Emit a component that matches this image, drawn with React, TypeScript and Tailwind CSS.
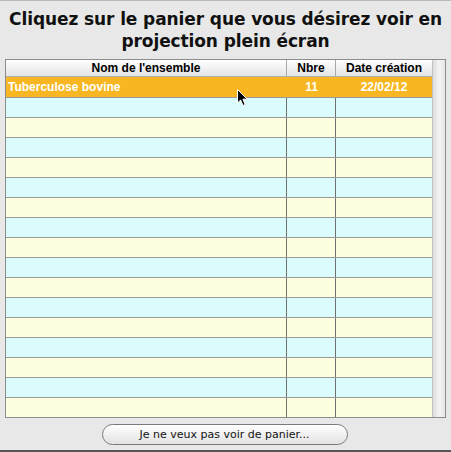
import React from "react";

const rows = Array.from({ length: 16 }, (_, i) => i);

function Cursor() {
  return (
    <svg
      className="absolute left-[236px] top-[87px]"
      width={13}
      height={19}
      viewBox="0 0 13 19"
    >
      <path
        d="M1.5 1.5 L1.5 15 L4.6 12 L7 17.5 L9.2 16.5 L6.9 11.2 L11.2 11.2 Z"
        fill="#000"
        stroke="#fff"
        strokeWidth={1}
        strokeLinejoin="round"
      />
    </svg>
  );
}

export default function App() {
  return (
    <div className="relative w-[451px] h-[452px] bg-[#e8e8e8] border-t border-[#b8b8b8] flex flex-col overflow-hidden">
      {/* Title */}
      <h1 className="pt-[7px] text-center text-[17px] leading-[22px] font-bold text-[#111] tracking-[-0.1px] whitespace-nowrap [font-family:'DejaVu_Sans',sans-serif]">
        <div>Cliquez sur le panier que vous désirez voir en</div>
        <div>projection plein écran</div>
      </h1>

      {/* Table */}
      <div className="ml-[5px] mt-[7px] w-[441px] h-[359px] border border-[#8c8c8c] bg-white flex [font-family:'Liberation_Sans',Arial,sans-serif]">
        <div className="w-[426px] flex flex-col">
          {/* Header */}
          <div className="h-[17px] flex border-b border-[#b0b0b0] bg-gradient-to-b from-white to-[#e4e4e4] text-[12px] font-bold text-black leading-[16px]">
            <div className="w-[281px] text-center border-r border-[#a8a8a8]">Nom de l'ensemble</div>
            <div className="w-[49px] text-center border-r border-[#a8a8a8]">Nbre</div>
            <div className="flex-1 text-center">Date création</div>
          </div>

          {/* Selected row */}
          <div className="h-[20px] flex bg-[#f8b722] text-white text-[12px] font-bold leading-[20px]">
            <div className="w-[281px] pl-[2px]">Tuberculose bovine</div>
            <div className="w-[49px] text-center">11</div>
            <div className="flex-1 text-center">22/02/12</div>
          </div>

          {rows.map((i) => (
            <div
              key={i}
              className={
                "h-[20px] shrink-0 flex border-t border-[#9a9a9a] " +
                (i % 2 === 0 ? "bg-[#dafcfd]" : "bg-[#fefee0]")
              }
            >
              <div className="w-[281px] border-r border-[#707070]" />
              <div className="w-[49px] border-r border-[#707070]" />
              <div className="flex-1" />
            </div>
          ))}
        </div>

        {/* Scrollbar track */}
        <div className="flex-1 border-l border-[#c4c4c4] bg-gradient-to-r from-[#dcdcdc] via-[#f4f4f4] to-[#e6e6e6]" />
      </div>

      {/* Button */}
      <div className="mt-[6px] flex justify-center">
        <button className="ml-[-2px] w-[246px] h-[21px] rounded-full border border-[#7a7a7a] bg-gradient-to-b from-white to-[#e2e2e2] text-[11px] leading-[19px] text-[#111] [font-family:'DejaVu_Sans',sans-serif]">
          Je ne veux pas voir de panier...
        </button>
      </div>

      <div className="absolute left-0 bottom-0 w-full h-[2px] bg-[#555]" />
      <Cursor />
    </div>
  );
}
